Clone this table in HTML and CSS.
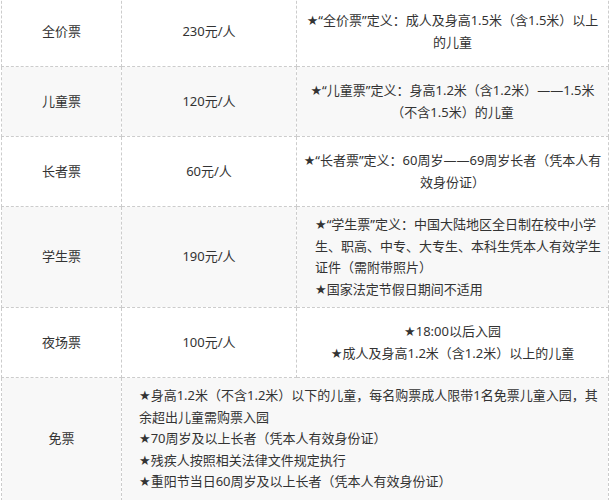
FILE: index.html
```html
<!DOCTYPE html>
<html lang="zh-CN">
<head>
<meta charset="utf-8">
<title>票价</title>
<link rel="stylesheet" href="styles.css">
</head>
<body>
<table class="prices">
  <colgroup>
    <col class="c-type">
    <col class="c-price">
    <col class="c-desc">
  </colgroup>
  <tbody>
    <tr class="row">
      <td class="cell">全价票</td>
      <td class="cell">230元/人</td>
      <td class="cell desc">★“全价票”定义：成人及身高1.5米（含1.5米）以上<br>的儿童</td>
    </tr>
    <tr class="row alt">
      <td class="cell">儿童票</td>
      <td class="cell">120元/人</td>
      <td class="cell desc">★“儿童票”定义：身高1.2米（含1.2米）——1.5米<br>（不含1.5米）的儿童</td>
    </tr>
    <tr class="row">
      <td class="cell">长者票</td>
      <td class="cell">60元/人</td>
      <td class="cell desc">★“长者票”定义：60周岁——69周岁长者（凭本人有<br>效身份证）</td>
    </tr>
    <tr class="row alt">
      <td class="cell">学生票</td>
      <td class="cell">190元/人</td>
      <td class="cell desc left student">★“学生票”定义：中国大陆地区全日制在校中小学<br>生、职高、中专、大专生、本科生凭本人有效学生<br>证件（需附带照片）<br>★国家法定节假日期间不适用</td>
    </tr>
    <tr class="row">
      <td class="cell">夜场票</td>
      <td class="cell">100元/人</td>
      <td class="cell desc">★18:00以后入园<br>★成人及身高1.2米（含1.2米）以上的儿童</td>
    </tr>
    <tr class="row alt">
      <td class="cell">免票</td>
      <td class="cell desc left free" colspan="2">★身高1.2米（不含1.2米）以下的儿童，每名购票成人限带1名免票儿童入园，其<br>余超出儿童需购票入园<br>★70周岁及以上长者（凭本人有效身份证）<br>★残疾人按照相关法律文件规定执行<br>★重阳节当日60周岁及以上长者（凭本人有效身份证）</td>
    </tr>
  </tbody>
</table>
</body>
</html>
```

FILE: styles.css
```css
html, body {
  margin: 0;
  padding: 0;
  background: #ffffff;
}

body {
  font-family: "Noto Sans", "DejaVu Sans", "Noto Sans CJK SC", sans-serif;
  font-size: 13px;
  color: #333333;
}

.prices {
  border-collapse: collapse;
  table-layout: fixed;
  width: 608px;
  margin: -4px 0 0 1px;
}

.c-type { width: 120px; }
.c-price { width: 175px; }

.row {
  height: 70px;
  background: #ffffff;
}

.row.alt {
  background: #f8f8f8;
}

.cell {
  border: 1px dashed #cccccc;
  padding: 7px 4px;
  line-height: 21.5px;
  text-align: center;
  vertical-align: middle;
  white-space: nowrap;
  overflow: hidden;
}

.left {
  text-align: left;
}

.student {
  padding-left: 18px;
}

.free {
  padding-left: 17px;
}
```
